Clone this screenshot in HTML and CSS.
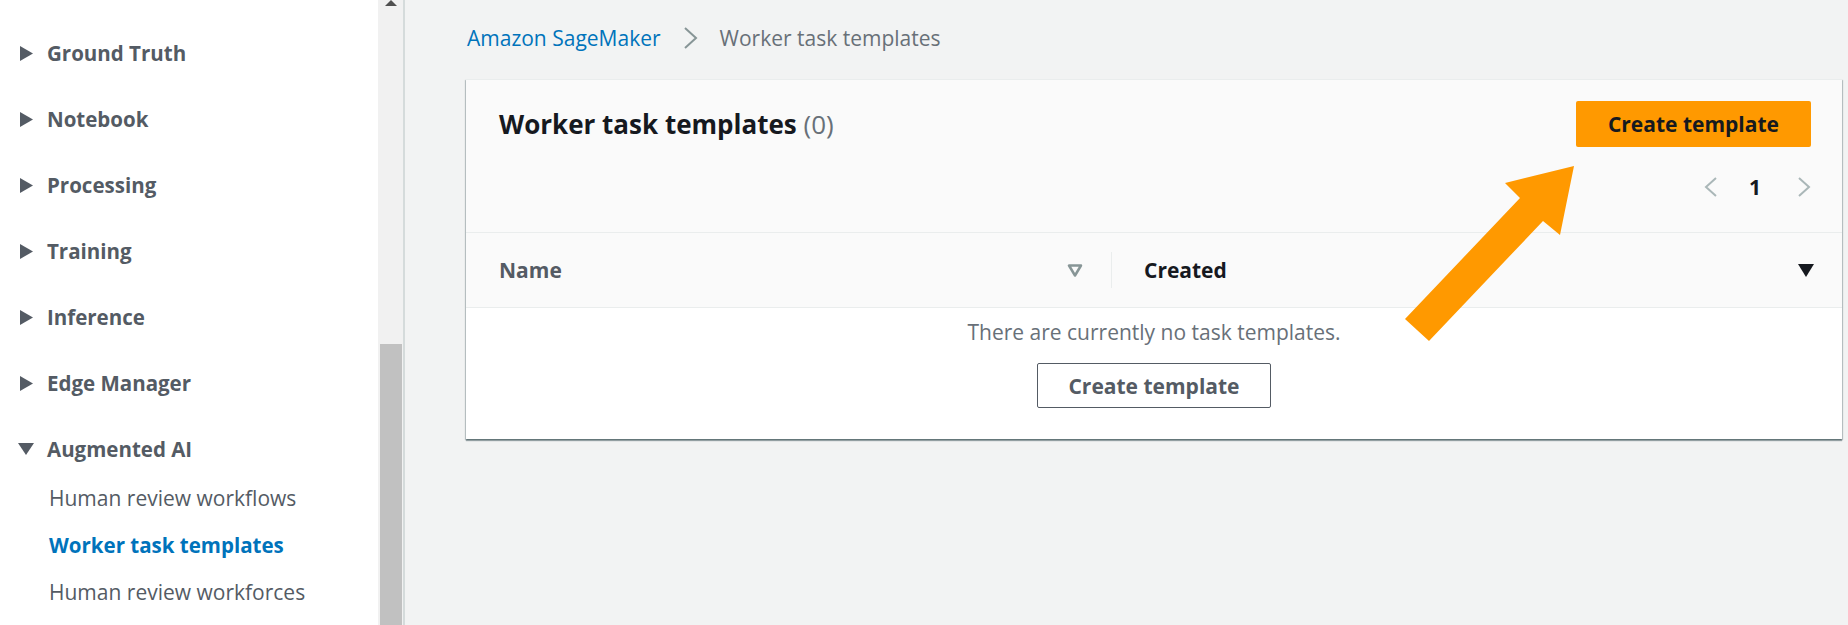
FILE: index.html
```html
<!DOCTYPE html>
<html lang="en">
<head>
  <meta charset="UTF-8" />
  <title>Worker task templates</title>
  <link rel="stylesheet" href="styles.css">
</head>
<body>
  <!-- Side navigation -->
  <nav class="sidebar">
    <div class="nav-item">
      <svg class="caret" width="13" height="15" viewBox="0 0 13 15"><path d="M0 0 L13 7.5 L0 15 Z" /></svg>
      Ground Truth
    </div>
    <div class="nav-item">
      <svg class="caret" width="13" height="15" viewBox="0 0 13 15"><path d="M0 0 L13 7.5 L0 15 Z" /></svg>
      Notebook
    </div>
    <div class="nav-item">
      <svg class="caret" width="13" height="15" viewBox="0 0 13 15"><path d="M0 0 L13 7.5 L0 15 Z" /></svg>
      Processing
    </div>
    <div class="nav-item">
      <svg class="caret" width="13" height="15" viewBox="0 0 13 15"><path d="M0 0 L13 7.5 L0 15 Z" /></svg>
      Training
    </div>
    <div class="nav-item">
      <svg class="caret" width="13" height="15" viewBox="0 0 13 15"><path d="M0 0 L13 7.5 L0 15 Z" /></svg>
      Inference
    </div>
    <div class="nav-item">
      <svg class="caret" width="13" height="15" viewBox="0 0 13 15"><path d="M0 0 L13 7.5 L0 15 Z" /></svg>
      Edge Manager
    </div>
    <div class="nav-item open">
      <svg class="caret down" width="16" height="12" viewBox="0 0 16 12"><path d="M0 0 L16 0 L8 12 Z" /></svg>
      Augmented AI
    </div>
    <ul class="sub-list">
      <li>Human review workflows</li>
      <li class="active">Worker task templates</li>
      <li>Human review workforces</li>
    </ul>
  </nav>

  <div class="scrollbar">
    <span class="scroll-arrow"></span>
    <span class="scroll-thumb"></span>
  </div>

  <!-- Main content -->
  <main class="content">
    <div class="breadcrumb">
      <a href="#">Amazon SageMaker</a>
      <svg class="crumb-sep" width="15" height="22" viewBox="0 0 15 22"><path d="M2 1 L13 11 L2 21" /></svg>
      <span>Worker task templates</span>
    </div>

    <section class="card">
      <div class="card-header">
        <div class="header-top">
          <h1>Worker task templates <span class="count">(0)</span></h1>
          <button class="btn-primary">Create template</button>
        </div>
        <div class="pagination">
          <svg class="page-arrow" width="14" height="20" viewBox="0 0 14 20"><path d="M12 1 L2 10 L12 19" /></svg>
          <span class="page-num">1</span>
          <svg class="page-arrow" width="14" height="20" viewBox="0 0 14 20"><path d="M2 1 L12 10 L2 19" /></svg>
        </div>
      </div>

      <div class="table-head">
        <div class="th th-name">
          <span>Name</span>
          <svg width="16" height="13" viewBox="0 0 16 13"><path d="M2 1.5 L14 1.5 L8 11.5 Z" class="sort-outline" /></svg>
        </div>
        <div class="th-divider"></div>
        <div class="th th-created">
          <span>Created</span>
          <svg width="16" height="13" viewBox="0 0 16 13"><path d="M0 0 L16 0 L8 13 Z" /></svg>
        </div>
      </div>

      <div class="empty">
        <p>There are currently no task templates.</p>
        <button class="btn-normal">Create template</button>
      </div>
    </section>
  </main>

  <!-- Annotation arrow -->
  <svg class="callout" width="1848" height="625" viewBox="0 0 1848 625">
    <polygon points="1574,166 1505,183 1520,198 1405,319 1429,341 1543,221 1560,235" />
  </svg>
</body>
</html>
```

FILE: styles.css
```css
/* Reset */
* {
  box-sizing: border-box;
  margin: 0;
  padding: 0;
}

body, html {
  height: 100%;
  font-family: 'Open Sans', 'Noto Sans', sans-serif;
  color: #16191f;
  overflow: hidden;
}

body {
  position: relative;
  display: flex;
  background-color: #f2f3f3;
}

/* Sidebar */
.sidebar {
  width: 378px;
  flex-shrink: 0;
  background: white;
  padding-top: 20px;
}

.nav-item {
  height: 66px;
  display: flex;
  align-items: center;
  padding-left: 20px;
  font-size: 20.5px;
  font-weight: 700;
  color: #545b64;
}

.nav-item .caret {
  fill: #545b64;
  margin-right: 14px;
}

.nav-item .caret.down {
  margin-left: -2px;
  margin-right: 13px;
}

.sub-list {
  list-style: none;
  margin-top: -8px;
}

.sub-list li {
  height: 47px;
  display: flex;
  align-items: center;
  padding-left: 49px;
  font-size: 21px;
  color: #545b64;
}

.sub-list li.active {
  color: #0073bb;
  font-weight: 700;
  font-size: 20.5px;
}

.scrollbar {
  width: 27px;
  flex-shrink: 0;
  background: #f1f1f1;
  border-right: 2px solid #d5dbdb;
  display: flex;
  flex-direction: column;
}

.scroll-arrow {
  align-self: center;
  width: 0;
  height: 0;
  border-left: 6px solid transparent;
  border-right: 6px solid transparent;
  border-bottom: 6px solid #505050;
}

.scroll-thumb {
  flex: 1;
  margin: 338px 1px 0 2px;
  background: #c1c1c1;
}

/* Main */
.content {
  flex: 1;
  padding: 22px 6px 0 61px;
}

.breadcrumb {
  display: flex;
  align-items: center;
  height: 32px;
  font-size: 21px;
  color: #687078;
  padding-left: 1px;
}

.breadcrumb a {
  color: #0073bb;
  text-decoration: none;
}

.crumb-sep {
  margin: 0 22px 0 22px;
  fill: none;
  stroke: #879596;
  stroke-width: 2;
}

.card {
  margin-top: 25px;
  background: white;
  border-top: 1px solid #eaeded;
  box-shadow: 0 2px 1px 0 rgba(0, 28, 36, 0.35), 1px 1px 1px 0 rgba(0, 28, 36, 0.2), -1px 1px 1px 0 rgba(0, 28, 36, 0.2);
}

.card-header {
  background: #fafafa;
  padding: 21px 31px 33px 33px;
  border-bottom: 1px solid #eaeded;
}

.header-top {
  display: flex;
  justify-content: space-between;
  align-items: center;
  height: 46px;
}

.header-top h1 {
  font-size: 26px;
  font-weight: 700;
  line-height: 46px;
  color: #16191f;
}

.header-top .count {
  font-weight: 400;
  color: #687078;
}

.btn-primary {
  height: 46px;
  padding: 0 32px;
  border: none;
  border-radius: 2px;
  background: #ff9900;
  color: #16191f;
  font-family: inherit;
  font-size: 21px;
  font-weight: 700;
}

.pagination {
  display: flex;
  justify-content: flex-end;
  align-items: center;
  height: 24px;
  margin-top: 28px;
}

.page-arrow {
  fill: none;
  stroke: #aab7b8;
  stroke-width: 2;
}

.page-num {
  font-size: 21px;
  font-weight: 700;
  margin: 0 36px 0 31px;
}

/* Table header */
.table-head {
  display: flex;
  align-items: center;
  height: 75px;
  background: #fafafa;
  border-bottom: 1px solid #eaeded;
}

.th {
  display: flex;
  justify-content: space-between;
  align-items: center;
  font-size: 21px;
  font-weight: 700;
}

.th-name {
  width: 645px;
  padding: 0 28px 0 33px;
  color: #545b64;
}

.sort-outline {
  fill: none;
  stroke: #879596;
  stroke-width: 2.5;
  stroke-linejoin: round;
}

.th-divider {
  width: 1px;
  height: 36px;
  background: #eaeded;
}

.th-created {
  flex: 1;
  padding: 0 28px 0 32px;
  color: #16191f;
}

.th-created svg {
  fill: #16191f;
}

/* Empty state */
.empty {
  display: flex;
  flex-direction: column;
  align-items: center;
  padding: 10px 0 31px;
}

.empty p {
  font-size: 21px;
  line-height: 28px;
  color: #687078;
}

.btn-normal {
  margin-top: 17px;
  height: 45px;
  padding: 0 30px;
  border: 1px solid #545b64;
  border-radius: 2px;
  background: white;
  color: #545b64;
  font-family: inherit;
  font-size: 21px;
  font-weight: 700;
}

/* Annotation */
.callout {
  position: absolute;
  left: 0;
  top: 0;
  pointer-events: none;
}

.callout polygon {
  fill: #ff9900;
}
```
